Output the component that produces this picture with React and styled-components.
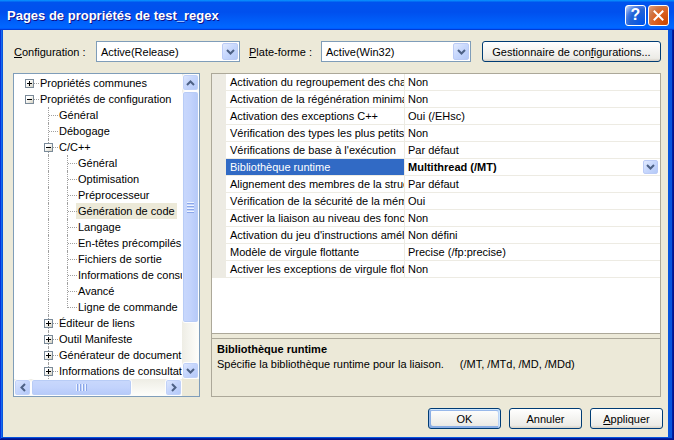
import React from 'react'
import styled, { createGlobalStyle, css } from 'styled-components'

const GlobalStyle = createGlobalStyle`
  html, body {
    margin: 0;
    padding: 0;
    background: #ffffff;
  }
  body {
    font-family: "Liberation Sans", Arial, sans-serif;
    font-size: 11px;
    color: #000000;
  }
  * {
    box-sizing: border-box;
  }
`

const Window = styled.div`
  width: 674px;
  height: 440px;
  display: flex;
  flex-direction: column;
  background: #0855dd;
  box-shadow: inset -1px -1px #00138c, inset 1px 1px #0831d9, inset -2px -2px #001ea0, inset 2px 2px #166aee;
  overflow: hidden;
`

const TitleBar = styled.div`
  height: 30px;
  flex: none;
  display: flex;
  align-items: center;
  padding: 0 5px 0 7px;
  background: linear-gradient(180deg, #0997ff, #0053ee 8%, #0050ee 40%, #0066ff 88%, #0066ff 93%, #005bff 95%, #003dd7 96%, #003dd7);
`

const Title = styled.div`
  flex: 1;
  color: #ffffff;
  font-family: "Liberation Sans", Arial, sans-serif;
  font-weight: bold;
  font-size: 13px;
  text-shadow: 1px 1px #0f1089;
  padding-top: 1px;
`

const TitleButtons = styled.div`
  display: flex;
  gap: 2px;
`

const TitleButton = styled.div`
  width: 21px;
  height: 21px;
  border: 1px solid #ffffff;
  border-radius: 3px;
  display: flex;
  align-items: center;
  justify-content: center;
  color: #ffffff;
  font-family: "Liberation Sans", Arial, sans-serif;
  font-weight: bold;
  font-size: 16px;
  ${p => p.close
    ? css`
      background: radial-gradient(circle at 90% 90%, #cc4600 0%, #dc6527 55%, #cd7546 70%, #e3a07c 100%);
      background-color: #e04e24;
    `
    : css`
      background: radial-gradient(circle at 90% 90%, #0054e9 0%, #2263d5 55%, #4479e4 70%, #a3bbec 90%, #fff 100%);
    `}
`

const Body = styled.div`
  flex: 1;
  display: flex;
  flex-direction: column;
  background: #ece9d8;
  padding: 11px 7px 8px 10px;
  margin: 0 6px 3px 3px;
`

const ConfigRow = styled.div`
  display: flex;
  align-items: center;
  height: 21px;
`

const Label = styled.div`
  width: ${p => p.w}px;
  margin-left: ${p => p.ml || 0}px;
  padding-left: 1px;
  white-space: nowrap;
`

const Combo = styled.div`
  width: ${p => p.w}px;
  height: 21px;
  display: flex;
  align-items: center;
  border: 1px solid #7f9db9;
  background: #ffffff;
  padding: 1px;
`

const ComboText = styled.div`
  flex: 1;
  padding-left: 3px;
  white-space: nowrap;
  overflow: hidden;
`

const DropButton = styled.div`
  width: ${p => p.w || 16}px;
  height: ${p => p.h || 17}px;
  display: flex;
  align-items: center;
  justify-content: center;
  border: 1px solid #bbcbf6;
  border-radius: 2px;
  background: linear-gradient(135deg, #e3ebfe 0%, #c8d8fd 45%, #b4c9f7 100%);
`

const Button = styled.button`
  width: ${p => p.w}px;
  height: 21px;
  margin-left: ${p => p.ml || 0}px;
  padding: 0;
  font-family: "Liberation Sans", Arial, sans-serif;
  font-size: 11px;
  color: #000000;
  border: 1px solid #003c74;
  border-radius: 3px;
  background: linear-gradient(180deg, #ffffff, #ecebe6 86%, #d6d0c5);
  ${p => p.primary && css`
    box-shadow: inset -1px 1px #cee7ff, inset 1px 2px #98b8ea, inset -2px 2px #bcd4f6, inset 1px -1px #89ade4, inset 2px -2px #89ade4;
  `}
`

const Main = styled.div`
  display: flex;
  gap: 11px;
  height: 324px;
  margin-top: 11px;
`

const TreePanel = styled.div`
  width: 187px;
  display: flex;
  flex-direction: column;
  border: 1px solid #7f9db9;
  background: #ffffff;
`

const TreeBody = styled.div`
  flex: 1;
  display: flex;
  min-height: 0;
`

const TreeList = styled.div`
  flex: 1;
  overflow: hidden;
  padding: 1px 0 0 6px;
`

const TreeRow = styled.div`
  height: 16px;
  display: flex;
  align-items: center;
  white-space: nowrap;
`

const Indent = styled.div`
  width: 19px;
  height: 16px;
  flex: none;
  position: relative;
  ${p => p.line && css`
    &::before {
      content: '';
      position: absolute;
      left: 9px;
      top: 0;
      height: 16px;
      border-left: 1px dotted #a0a0a0;
    }
  `}
`

const Connector = styled.div`
  width: 19px;
  height: 16px;
  flex: none;
  position: relative;
  &::after {
    content: '';
    position: absolute;
    left: 10px;
    top: 8px;
    width: 9px;
    border-top: 1px dotted #a0a0a0;
  }
  ${p => !p.root && css`
    &::before {
      content: '';
      position: absolute;
      left: 9px;
      top: 0;
      height: ${p.last ? 9 : 16}px;
      border-left: 1px dotted #a0a0a0;
    }
  `}
`

const Expander = styled.div`
  position: absolute;
  left: 5px;
  top: 4px;
  width: 9px;
  height: 9px;
  z-index: 1;
  border: 1px solid #7a8a99;
  background: linear-gradient(135deg, #ffffff 30%, #d5d2c3 100%);
  &::before {
    content: '';
    position: absolute;
    left: 1px;
    top: 3px;
    width: 5px;
    height: 1px;
    background: #000000;
  }
  ${p => p.plus && css`
    &::after {
      content: '';
      position: absolute;
      left: 3px;
      top: 1px;
      width: 1px;
      height: 5px;
      background: #000000;
    }
  `}
`

const NodeLabel = styled.span`
  margin-left: -1px;
  padding: 1px 2px;
  line-height: 14px;
  background: ${p => (p.selected ? '#ece9d8' : 'transparent')};
`

const VScroll = styled.div`
  width: 17px;
  display: flex;
  flex-direction: column;
  background: linear-gradient(90deg, #eeede5, #fefefb);
`

const HScrollRow = styled.div`
  height: 17px;
  display: flex;
`

const HScroll = styled.div`
  flex: 1;
  display: flex;
  background: linear-gradient(180deg, #eeede5, #fefefb);
`

const Corner = styled.div`
  width: 17px;
  background: #ece9d8;
`

const ScrollButton = styled.div`
  width: 17px;
  height: 17px;
  flex: none;
  display: flex;
  align-items: center;
  justify-content: center;
  border: 1px solid #fefefe;
  border-radius: 3px;
  background: linear-gradient(135deg, #e0e9fe 0%, #c6d6fc 45%, #b2c7f8 100%);
  box-shadow: inset 0 0 0 1px #c0d1f8;
`

const Track = styled.div`
  flex: 1;
  display: flex;
  flex-direction: ${p => (p.vertical ? 'column' : 'row')};
`

const Thumb = styled.div`
  ${p => (p.vertical ? css`height: ${p.size}px; width: 17px;` : css`width: ${p.size}px; height: 17px;`)}
  flex: none;
  display: flex;
  flex-direction: ${p => (p.vertical ? 'column' : 'row')};
  align-items: center;
  justify-content: center;
  gap: 1px;
  border: 1px solid #fefefe;
  border-radius: 3px;
  background: ${p => (p.vertical
    ? 'linear-gradient(90deg, #c9d8fc 0%, #c2d3fc 50%, #b5c9f8 100%)'
    : 'linear-gradient(180deg, #c9d8fc 0%, #c2d3fc 50%, #b5c9f8 100%)')};
  box-shadow: inset 0 0 0 1px #b8ccf6;
`

const Grip = styled.div`
  ${p => (p.vertical ? 'width: 7px; height: 1px;' : 'width: 1px; height: 7px;')}
  background: #eef4fe;
  box-shadow: ${p => (p.vertical ? '0 1px #8aa6e9' : '1px 0 #8aa6e9')};
  margin: ${p => (p.vertical ? '0 0 1px 0' : '0 1px 0 0')};
`

const RightPane = styled.div`
  flex: 1;
  display: flex;
  flex-direction: column;
  border: 1px solid #aca899;
`

const Grid = styled.div`
  flex: 1;
  background: #ffffff;
  border-bottom: 1px solid #aca899;
`

const GridRow = styled.div`
  height: 17px;
  display: flex;
  border-bottom: 1px solid #edebe3;
  white-space: nowrap;
`

const Gutter = styled.div`
  width: 14px;
  flex: none;
  background: #edebe3;
`

const NameCell = styled.div`
  width: 179px;
  flex: none;
  padding-left: 4px;
  line-height: 16px;
  overflow: hidden;
  border-right: 1px solid #edebe3;
  background: ${p => (p.selected ? '#316ac5' : '#ffffff')};
  color: ${p => (p.selected ? '#ffffff' : '#000000')};
`

const ValueCell = styled.div`
  flex: 1;
  display: flex;
  align-items: center;
  padding: 0 2px 0 3px;
  line-height: 16px;
  font-weight: ${p => (p.selected ? 'bold' : 'normal')};
`

const ValueText = styled.div`
  flex: 1;
`

const Splitter = styled.div`
  height: 4px;
`

const Description = styled.div`
  height: 58px;
  border-top: 1px solid #aca899;
  padding: 3px 5px;
  line-height: 15px;
`

const DescTitle = styled.div`
  font-weight: bold;
`

const DescHint = styled.span`
  margin-left: 16px;
`

const ButtonRow = styled.div`
  display: flex;
  justify-content: flex-end;
  gap: 8px;
  margin: 11px -2px 0 0;
`

const ChevronDown = () => (
  <svg width="9" height="6" viewBox="0 0 9 6">
    <polyline points="1,1 4.5,4.5 8,1" fill="none" stroke="#4d6185" strokeWidth="2" />
  </svg>
)

const ChevronUp = () => (
  <svg width="9" height="6" viewBox="0 0 9 6">
    <polyline points="1,5 4.5,1.5 8,5" fill="none" stroke="#4d6185" strokeWidth="2" />
  </svg>
)

const ChevronLeft = () => (
  <svg width="6" height="9" viewBox="0 0 6 9">
    <polyline points="5,1 1.5,4.5 5,8" fill="none" stroke="#4d6185" strokeWidth="2" />
  </svg>
)

const ChevronRight = () => (
  <svg width="6" height="9" viewBox="0 0 6 9">
    <polyline points="1,1 4.5,4.5 1,8" fill="none" stroke="#4d6185" strokeWidth="2" />
  </svg>
)

const CloseGlyph = () => (
  <svg width="11" height="11" viewBox="0 0 11 11">
    <path d="M1.5 1.5 L9.5 9.5 M9.5 1.5 L1.5 9.5" stroke="#ffffff" strokeWidth="2" strokeLinecap="square" />
  </svg>
)

const tree = [
  { level: 0, text: 'Propriétés communes', box: '+' },
  { level: 0, text: 'Propriétés de configuration', box: '-' },
  { level: 1, text: 'Général' },
  { level: 1, text: 'Débogage' },
  { level: 1, text: 'C/C++', box: '-' },
  { level: 2, text: 'Général' },
  { level: 2, text: 'Optimisation' },
  { level: 2, text: 'Préprocesseur' },
  { level: 2, text: 'Génération de code', selected: true },
  { level: 2, text: 'Langage' },
  { level: 2, text: 'En-têtes précompilés' },
  { level: 2, text: 'Fichiers de sortie' },
  { level: 2, text: 'Informations de consultation' },
  { level: 2, text: 'Avancé' },
  { level: 2, text: 'Ligne de commande', last: true },
  { level: 1, text: 'Éditeur de liens', box: '+' },
  { level: 1, text: 'Outil Manifeste', box: '+' },
  { level: 1, text: 'Générateur de document', box: '+' },
  { level: 1, text: 'Informations de consultation', box: '+' },
]

const properties = [
  ['Activation du regroupement des chaînes', 'Non'],
  ['Activation de la régénération minimale', 'Non'],
  ['Activation des exceptions C++', 'Oui (/EHsc)'],
  ['Vérification des types les plus petits', 'Non'],
  ["Vérifications de base à l'exécution", 'Par défaut'],
  ['Bibliothèque runtime', 'Multithread (/MT)', true],
  ['Alignement des membres de la structure', 'Par défaut'],
  ['Vérification de la sécurité de la mémoire tampon', 'Oui'],
  ['Activer la liaison au niveau des fonctions', 'Non'],
  ["Activation du jeu d'instructions amélioré", 'Non défini'],
  ['Modèle de virgule flottante', 'Precise (/fp:precise)'],
  ['Activer les exceptions de virgule flottante', 'Non'],
]

const TreeNode = ({ node }) => {
  const indents = []
  for (let i = 0; i < node.level; i++) {
    indents.push(<Indent key={i} line={i > 0} />)
  }
  return (
    <TreeRow>
      {indents}
      <Connector root={node.level === 0} last={node.last}>
        {node.box && <Expander plus={node.box === '+'} />}
      </Connector>
      <NodeLabel selected={node.selected}>{node.text}</NodeLabel>
    </TreeRow>
  )
}

const App = () => (
  <>
    <GlobalStyle />
    <Window>
      <TitleBar>
        <Title>Pages de propriétés de test_regex</Title>
        <TitleButtons>
          <TitleButton>?</TitleButton>
          <TitleButton close>
            <CloseGlyph />
          </TitleButton>
        </TitleButtons>
      </TitleBar>

      <Body>
        <ConfigRow>
          <Label w={83}><u>C</u>onfiguration :</Label>
          <Combo w={144}>
            <ComboText>Active(Release)</ComboText>
            <DropButton><ChevronDown /></DropButton>
          </Combo>
          <Label w={73} ml={8}><u>P</u>late-forme :</Label>
          <Combo w={150}>
            <ComboText>Active(Win32)</ComboText>
            <DropButton><ChevronDown /></DropButton>
          </Combo>
          <Button w={179} ml={11}>Gestionnaire de con<u>f</u>igurations...</Button>
        </ConfigRow>

        <Main>
          <TreePanel>
            <TreeBody>
              <TreeList>
                {tree.map((node, index) => (
                  <TreeNode key={index} node={node} />
                ))}
              </TreeList>
              <VScroll>
                <ScrollButton><ChevronUp /></ScrollButton>
                <Track vertical>
                  <Thumb vertical size={232}>
                    <Grip vertical />
                    <Grip vertical />
                    <Grip vertical />
                    <Grip vertical />
                  </Thumb>
                </Track>
                <ScrollButton><ChevronDown /></ScrollButton>
              </VScroll>
            </TreeBody>
            <HScrollRow>
              <HScroll>
                <ScrollButton><ChevronLeft /></ScrollButton>
                <Track>
                  <Thumb size={101}>
                    <Grip />
                    <Grip />
                    <Grip />
                    <Grip />
                  </Thumb>
                </Track>
                <ScrollButton><ChevronRight /></ScrollButton>
              </HScroll>
              <Corner />
            </HScrollRow>
          </TreePanel>

          <RightPane>
            <Grid>
              {properties.map(([name, value, selected], index) => (
                <GridRow key={index}>
                  <Gutter />
                  <NameCell selected={selected}>{name}</NameCell>
                  <ValueCell selected={selected}>
                    <ValueText>{value}</ValueText>
                    {selected && (
                      <DropButton w={15} h={14}><ChevronDown /></DropButton>
                    )}
                  </ValueCell>
                </GridRow>
              ))}
            </Grid>
            <Splitter />
            <Description>
              <DescTitle>Bibliothèque runtime</DescTitle>
              <div>
                Spécifie la bibliothèque runtime pour la liaison.
                <DescHint>(/MT, /MTd, /MD, /MDd)</DescHint>
              </div>
            </Description>
          </RightPane>
        </Main>

        <ButtonRow>
          <Button w={73} primary>OK</Button>
          <Button w={73}>Annuler</Button>
          <Button w={73}><u>A</u>ppliquer</Button>
        </ButtonRow>
      </Body>
    </Window>
  </>
)

export default App
